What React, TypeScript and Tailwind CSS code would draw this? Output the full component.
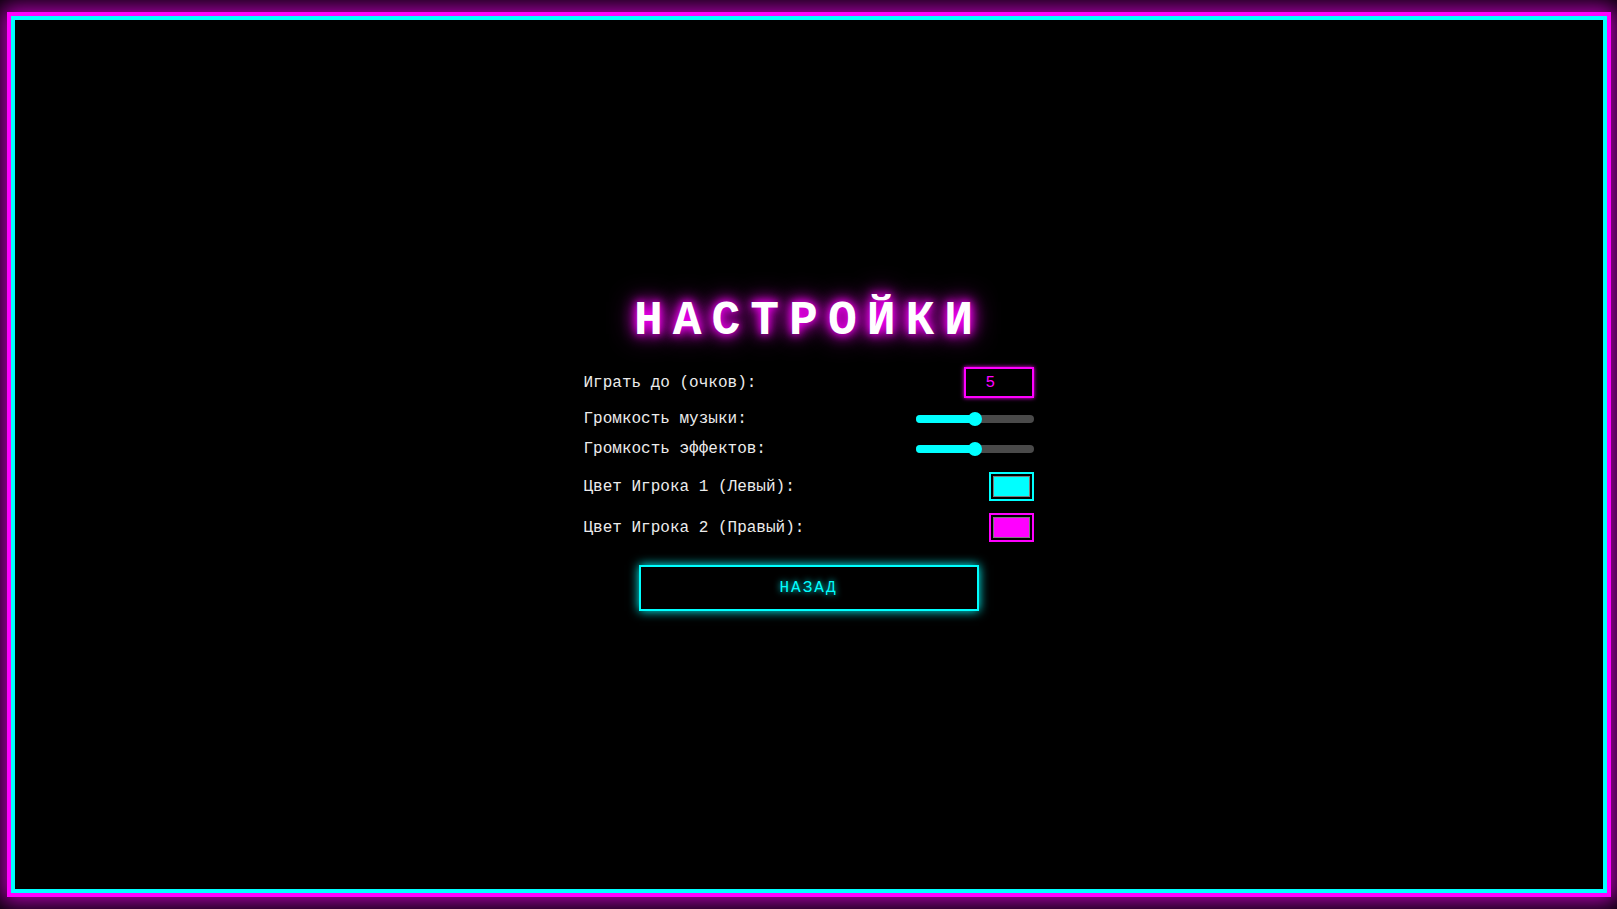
import type { ReactNode } from "react";

function Row({ label, children }: { label: string; children: ReactNode }) {
  return (
    <div className="flex items-center justify-between">
      <span className="text-[16px] leading-[18px] text-[#ececec]">{label}</span>
      {children}
    </div>
  );
}

function Slider({ value }: { value: number }) {
  return (
    <div className="relative h-[14px] w-[118px]">
      <div className="absolute left-0 right-0 top-[3px] h-[8px] rounded-full bg-[#4a4a4a]" />
      <div
        className="absolute left-0 top-[3px] h-[8px] rounded-full bg-[#00ffff]"
        style={{ width: `${value}%` }}
      />
      <div
        className="absolute top-0 h-[14px] w-[14px] -translate-x-1/2 rounded-full bg-[#00ffff]"
        style={{ left: `${value}%` }}
      />
    </div>
  );
}

function Swatch({ color, border }: { color: string; border: string }) {
  return (
    <div className={`h-[29px] w-[45px] border-2 p-[2px] ${border}`}>
      <div className={`h-full w-full border border-[#7a7a7a] ${color}`} />
    </div>
  );
}

export default function App() {
  return (
    <div className="flex h-[909px] w-full items-center justify-center overflow-hidden bg-black">
      <div className="h-[885px] w-[1604px] shrink-0 border-4 border-[#ff00ff] shadow-[0_0_22px_6px_#b000b0]">
        <div className="flex h-full w-full flex-col items-center justify-center border-4 border-[#00ffff] bg-black font-['Liberation_Mono','Courier_New',monospace]">
          <h1 className="mb-[23px] text-[48px] font-bold leading-[46px] tracking-[10px] text-white [text-shadow:0_0_8px_#ff00ff,0_0_16px_#ff00ff,0_0_26px_#c000c0]">
            НАСТРОЙКИ
          </h1>
          <div className="flex w-[450px] flex-col gap-[12px]">
            <Row label="Играть до (очков):">
              <div className="flex h-[31px] w-[70px] items-center border-2 border-[#ff00ff] pl-[20px] text-[16px] text-[#ff00ff] shadow-[0_0_4px_#ff00ff]">
                5
              </div>
            </Row>
            <Row label="Громкость музыки:">
              <Slider value={50} />
            </Row>
            <Row label="Громкость эффектов:">
              <Slider value={50} />
            </Row>
            <div className="mt-[2px]">
              <Row label="Цвет Игрока 1 (Левый):">
                <Swatch color="bg-[#00ffff]" border="border-[#00ffff]" />
              </Row>
            </div>
            <Row label="Цвет Игрока 2 (Правый):">
              <Swatch color="bg-[#ff00ff]" border="border-[#ff00ff]" />
            </Row>
          </div>
          <button className="mt-[23px] h-[46px] w-[340px] border-2 border-[#00ffff] bg-black text-[16px] tracking-[2px] text-[#00ffff] shadow-[0_0_10px_#00ffff] [text-shadow:0_0_6px_#00ffff]">
            НАЗАД
          </button>
        </div>
      </div>
    </div>
  );
}
